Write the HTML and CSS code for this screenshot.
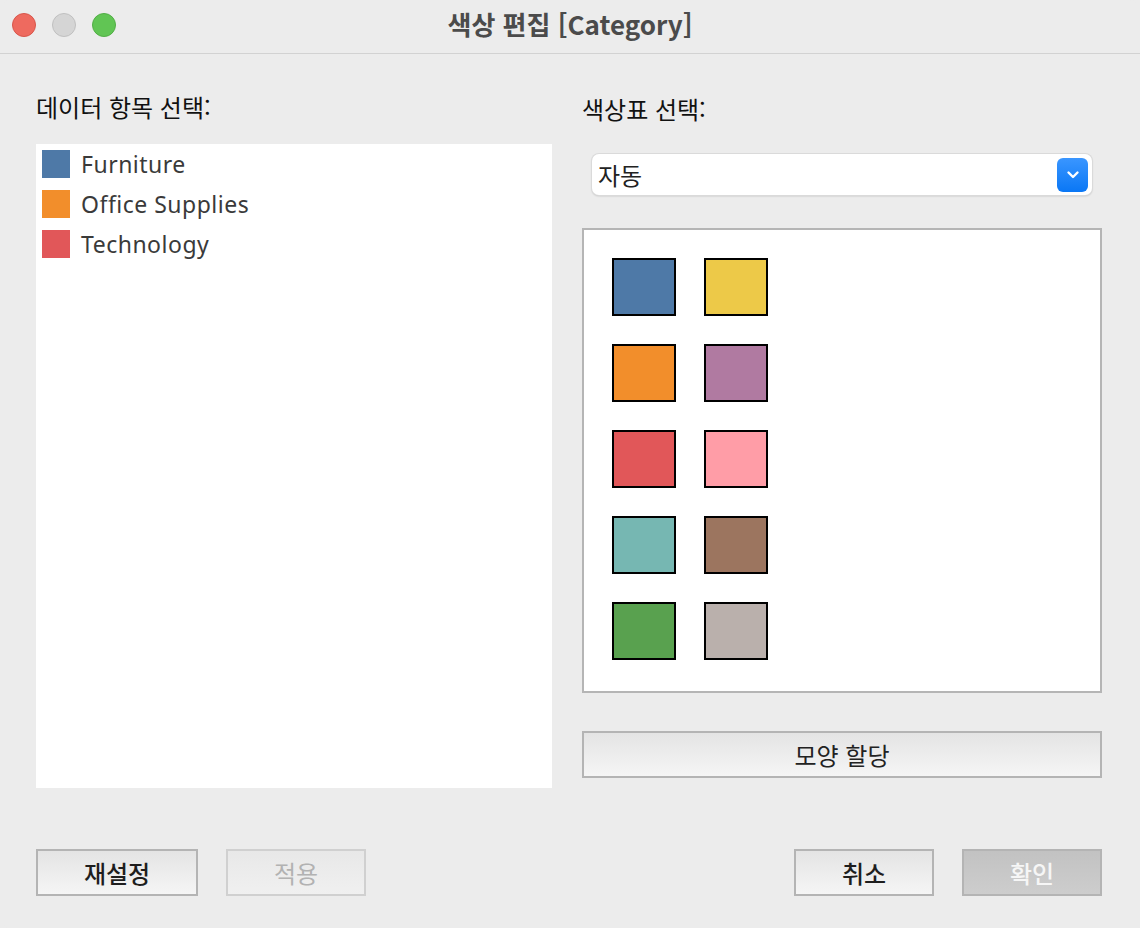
FILE: index.html
```html
<!DOCTYPE html>
<html lang="ko">
<head>
<meta charset="utf-8">
<link rel="stylesheet" href="styles.css">
</head>
<body>
<div class="window">
  <div class="titlebar">
    <div class="lights">
      <span class="light red"></span>
      <span class="light gray"></span>
      <span class="light green"></span>
    </div>
    <div class="title">색상 편집 [Category]</div>
  </div>
  <div class="content">
    <div class="columns">
      <div class="col-left">
        <div class="label">데이터 항목 선택:</div>
        <div class="list">
          <div class="item"><span class="chip c-blue"></span><span class="item-text">Furniture</span></div>
          <div class="item"><span class="chip c-orange"></span><span class="item-text">Office Supplies</span></div>
          <div class="item"><span class="chip c-red"></span><span class="item-text">Technology</span></div>
        </div>
      </div>
      <div class="col-right">
        <div class="label">색상표 선택:</div>
        <div class="select">
          <span class="select-text">자동</span>
          <span class="select-btn">
            <svg width="14" height="10" viewBox="0 0 14 10"><path d="M2.5 2.5 L7 7 L11.5 2.5" fill="none" stroke="#fff" stroke-width="2.4" stroke-linecap="round" stroke-linejoin="round"/></svg>
          </span>
        </div>
        <div class="palette">
          <span class="sw s1"></span><span class="sw s2"></span>
          <span class="sw s3"></span><span class="sw s4"></span>
          <span class="sw s5"></span><span class="sw s6"></span>
          <span class="sw s7"></span><span class="sw s8"></span>
          <span class="sw s9"></span><span class="sw s10"></span>
        </div>
        <button class="btn wide">모양 할당</button>
      </div>
    </div>
    <div class="footer">
      <div class="footer-group">
        <button class="btn small first bold">재설정</button>
        <button class="btn small disabled">적용</button>
      </div>
      <div class="footer-group">
        <button class="btn small bold">취소</button>
        <button class="btn small primary-off">확인</button>
      </div>
    </div>
  </div>
</div>
</body>
</html>
```

FILE: styles.css
```css
* { box-sizing: border-box; }
html, body {
  margin: 0;
  padding: 0;
  width: 1140px;
  height: 928px;
  background: #ececec;
  font-family: "Noto Sans", "Noto Sans CJK KR", sans-serif;
  overflow: hidden;
}
.window {
  width: 1140px;
  height: 928px;
  background: #ececec;
  border-radius: 10px;
  display: flex;
  flex-direction: column;
}
.titlebar {
  height: 54px;
  border-bottom: 1px solid #d2d2d2;
  position: relative;
  display: flex;
  align-items: center;
  justify-content: center;
}
.lights {
  position: absolute;
  left: 12px;
  top: 13px;
  display: flex;
  gap: 16px;
}
.light {
  width: 24px;
  height: 24px;
  border-radius: 50%;
  display: block;
}
.red { background: #ee6a5f; border: 1px solid #d8564b; }
.gray { background: #d5d5d5; border: 1px solid #c0c0c0; }
.green { background: #61c554; border: 1px solid #52ae46; }
.title {
  font-family: "Noto Sans CJK KR", "Noto Sans", sans-serif;
  font-weight: 700;
  font-size: 26px;
  line-height: 30px;
  color: #4b4b4b;
  margin-top: -6px;
}
.content {
  flex: 1;
  padding: 38px 38px 0 36px;
  display: flex;
  flex-direction: column;
}
.columns {
  display: flex;
  gap: 30px;
}
.col-left {
  width: 516px;
  display: flex;
  flex-direction: column;
}
.col-right {
  width: 520px;
  display: flex;
  flex-direction: column;
}
.label {
  font-family: "Noto Sans CJK KR", sans-serif;
  font-size: 24px;
  line-height: 30px;
  height: 30px;
  color: #111;
}
.col-right .label { margin-top: 2px; height: 28px; }
.list {
  margin-top: 22px;
  height: 644px;
  background: #fff;
  padding: 6px 0 0 6px;
}
.item {
  display: flex;
  align-items: center;
  height: 40px;
  padding-bottom: 12px;
}
.chip {
  width: 28px;
  height: 28px;
  display: block;
  flex: none;
}
.item-text {
  margin-left: 11px;
  font-size: 23px;
  letter-spacing: 0.5px;
  color: #3a3a3a;
  font-family: "Noto Sans", sans-serif;
  line-height: 28px;
}
.c-blue { background: #4e79a7; }
.c-orange { background: #f28e2b; }
.c-red { background: #e15759; }
.select {
  margin: 32px 10px 0 10px;
  height: 41px;
  background: #fff;
  border-radius: 7px;
  box-shadow: 0 0 0 1px #dadada, 0 1px 2px rgba(0,0,0,0.25);
  display: flex;
  align-items: center;
  justify-content: space-between;
  padding: 0 4px 0 6px;
}
.select-text {
  font-family: "Noto Sans CJK KR", sans-serif;
  font-size: 24px;
  color: #222;
}
.select-btn {
  width: 31px;
  height: 34px;
  border-radius: 6px;
  background: linear-gradient(#3a96ff, #0a77f5);
  display: flex;
  align-items: center;
  justify-content: center;
}
.palette {
  margin-top: 33px;
  height: 465px;
  background: #fff;
  border: 2px solid #b5b5b5;
  padding: 28px 0 0 28px;
  display: grid;
  grid-template-columns: 64px 64px;
  grid-auto-rows: 58px;
  column-gap: 28px;
  row-gap: 28px;
  align-content: start;
}
.sw {
  display: block;
  border: 2px solid #000;
}
.s1 { background: #4e79a7; }
.s2 { background: #edc948; }
.s3 { background: #f28e2b; }
.s4 { background: #b07aa1; }
.s5 { background: #e15759; }
.s6 { background: #ff9da7; }
.s7 { background: #76b7b2; }
.s8 { background: #9c755f; }
.s9 { background: #59a14f; }
.s10 { background: #bab0ac; }
.btn {
  font-family: "Noto Sans CJK KR", sans-serif;
  font-size: 24px;
  color: #222;
  height: 47px;
  border: 2px solid #b4b4b4;
  background: linear-gradient(#e4e4e4, #f5f5f5);
  padding: 0;
  margin: 0;
  border-radius: 0;
}
.wide {
  margin-top: 38px;
  width: 520px;
  height: 47px;
}
.footer {
  margin-top: 61px;
  display: flex;
  justify-content: space-between;
}
.footer-group {
  display: flex;
  gap: 28px;
}
.small { width: 140px; }
.small.first { width: 162px; }
.bold { font-weight: 500; color: #1e1e1e; }
.disabled {
  color: #b2b2b2;
  border-color: #d0d0d0;
  background: linear-gradient(#e8e8e8, #f0f0f0);
}
.primary-off {
  color: #f6f6f6;
  background: linear-gradient(#c2c2c2, #cdcdcd);
  border-color: #b4b4b4;
  font-weight: 500;
}
```
